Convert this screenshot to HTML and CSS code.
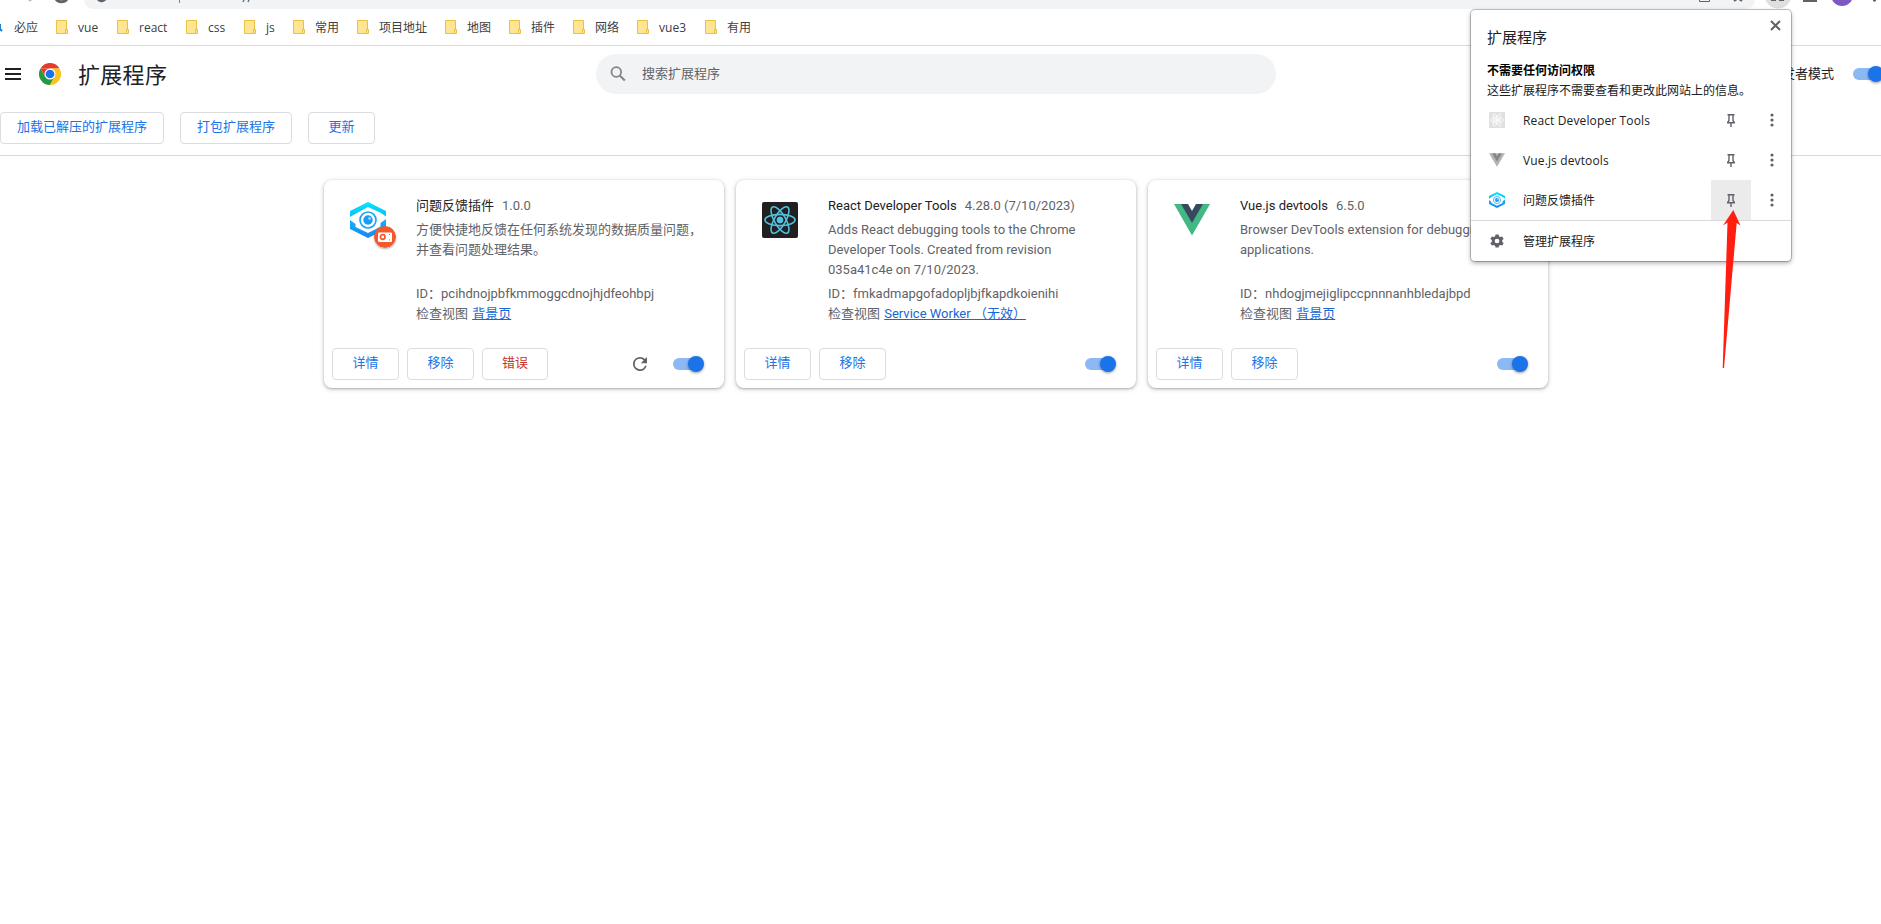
FILE: index.html
```html
<!DOCTYPE html>
<html lang="zh-CN">
<head>
<meta charset="utf-8">
<title>扩展程序</title>
<link rel="stylesheet" href="styles.css">
</head>
<body>
<svg width="0" height="0" class="defs">
  <defs>
    <linearGradient id="cyan" x1="0" y1="0" x2="0" y2="1"><stop offset="0" stop-color="#05e5ff"/><stop offset="1" stop-color="#1b84f2"/></linearGradient>
    <symbol id="folder" viewBox="0 0 12 14"><path d="M.5.5h10v9h1v4H.5z" fill="#ffe591" stroke="#e8c341"/><path d="M9.500 13V9.500h2" fill="none" stroke="#e8c341"/></symbol>
    <symbol id="eye" viewBox="0 0 36 36">
      <path d="M0 15V9L18 0l18 9v5.500l-5-3.500L18 5 6 11.500zM0 18l5.500 4v3L18 31l8-4 4.500-2.500V21L36 17v10l-18 9L0 27z" fill="url(#cyan)"/>
      <path d="M5 18Q18 1 31 18Q18 33 5 18z" fill="#fff"/>
      <circle cx="18" cy="18" r="8" fill="none" stroke="#1ba4f5" stroke-width="1.700"/><circle cx="18" cy="18" r="4.700" fill="#179ff4"/><circle cx="19.500" cy="16.500" r="1.300" fill="#a5e6ff"/>
    </symbol>
    <symbol id="atom" viewBox="0 0 36 36"><g fill="none" stroke-width="1.600"><ellipse cx="18" cy="18" rx="15" ry="5.600"/><ellipse cx="18" cy="18" rx="15" ry="5.600" transform="rotate(60 18 18)"/><ellipse cx="18" cy="18" rx="15" ry="5.600" transform="rotate(120 18 18)"/></g><circle cx="18" cy="18" r="3"/></symbol>
    <symbol id="pin" viewBox="0 0 8 13"><path d="M.5.700h7M2 1v5.500L.7 8.500M6 1v5.500l1.300 2M0 8.700h8M4 9v4" fill="none" stroke="#5f6368" stroke-width="1.400"/></symbol>
    <symbol id="dots" viewBox="0 0 4 14"><circle cx="2" cy="2" r="1.600"/><circle cx="2" cy="7" r="1.600"/><circle cx="2" cy="12" r="1.600"/></symbol>
  </defs>
</svg>

<div class="toolbar">
  <svg class="nav" width="84" height="9"><path d="M29 1l3-2" stroke="#babcbe" stroke-width="2"/><path d="M56-1a7 7 0 0 0 11 0" fill="none" stroke="#5f6368" stroke-width="3"/></svg>
  <div class="omnibox">
    <svg width="1671" height="9"><path d="M14-1q4 4 8-1" fill="none" stroke="#5f6368" stroke-width="3"/><path d="M95.500 0v3" stroke="#80868b"/><path d="M159 2l1-2m4 2l1-2" stroke="#5f7894" stroke-width="1.500"/><path d="M1615.500-1v2.500h10V-1" fill="none" stroke="#5f6368"/><path d="M1650 1l3-2m5 2l-3-2" stroke="#5f6368" stroke-width="2"/></svg>
  </div>
  <svg class="actions" width="126" height="9"><circle cx="23" cy="-5" r="13.500" fill="#dedfe1"/><path d="M16 0h5v1h-5zM24 0h5v1h-5z" fill="#5f6368"/><path d="M48 0h14v2H48z" fill="#5f6368"/><circle cx="87" cy="-5" r="11" fill="#7e57c2"/><circle cx="119.500" cy="0" r="1.700" fill="#5f6368"/></svg>
</div>
<nav class="bookmarks">
  <a class="bing"><svg width="4" height="14"><path d="M0 4v5l2 2" fill="none" stroke="#1684d0" stroke-width="2"/></svg>必应</a>
  <a class="w-vue"><svg><use href="#folder"/></svg>vue</a>
  <a class="w-react"><svg><use href="#folder"/></svg>react</a>
  <a class="w-css"><svg><use href="#folder"/></svg>css</a>
  <a class="w-js"><svg><use href="#folder"/></svg>js</a>
  <a><svg><use href="#folder"/></svg>常用</a>
  <a><svg><use href="#folder"/></svg>项目地址</a>
  <a><svg><use href="#folder"/></svg>地图</a>
  <a><svg><use href="#folder"/></svg>插件</a>
  <a><svg><use href="#folder"/></svg>网络</a>
  <a class="w-vue3"><svg><use href="#folder"/></svg>vue3</a>
  <a><svg><use href="#folder"/></svg>有用</a>
</nav>

<header class="header">
  <svg class="menu" width="16" height="12"><path d="M0 1h16M0 6h16M0 11h16" stroke="#202124" stroke-width="2"/></svg>
  <svg class="logo" width="22" height="22" viewBox="0 0 48 48">
    <path d="M3.200 12A24 24 0 0 1 44.800 12H24z" fill="#e33b2e"/><path d="M3.200 12A24 24 0 0 0 24 48L34.400 30 24 24 13.600 30z" fill="#249a41"/><path d="M44.800 12A24 24 0 0 1 24 48L34.400 30 24 12z" fill="#fcc31e"/><path d="M3.200 12L13.600 30 24 24V12z" fill="#e33b2e"/>
    <circle cx="24" cy="24" r="12" fill="#fff"/><circle cx="24" cy="24" r="9.500" fill="#1a73e8"/>
  </svg>
  <h1>扩展程序</h1>
  <div class="search">
    <svg width="16" height="16" viewBox="0 0 16 16" fill="none" stroke="#80868b"><circle cx="6.300" cy="6" r="4.800" stroke-width="1.800"/><path d="M9.800 9.500l5 5" stroke-width="2"/></svg>
    <span>搜索扩展程序</span>
  </div>
  <div class="devmode"><span>开发者模式</span><i class="toggle"></i></div>
</header>
<div class="devbar">
  <button class="btn load">加载已解压的扩展程序</button>
  <button class="btn pack">打包扩展程序</button>
  <button class="btn update">更新</button>
</div>

<main class="cards">
  <section class="card">
    <div class="info">
      <div class="icon"><svg width="36" height="36"><use href="#eye"/></svg>
        <svg class="badge" width="22" height="22"><circle cx="11" cy="11" r="11" fill="#f4592b"/><rect x="4" y="6.500" width="14" height="9.500" rx="1.200" fill="#fff"/><circle cx="8.700" cy="11" r="2.300" fill="none" stroke="#f4592b" stroke-width="1.700"/><path d="M15 8.500h1M15 14h1" stroke="#f4592b"/></svg>
      </div>
      <div class="text">
        <div class="name">问题反馈插件<span>1.0.0</span></div>
        <p class="desc">方便快捷地反馈在任何系统发现的数据质量问题，<br>并查看问题处理结果。</p>
        <div class="meta">ID：pcihdnojpbfkmmoggcdnojhjdfeohbpj</div>
        <div class="meta">检查视图 <a>背景页</a></div>
      </div>
    </div>
    <div class="foot"><button class="btn">详情</button><button class="btn">移除</button><button class="btn error">错误</button>
      <svg class="reload" width="14" height="14" viewBox="4 4 16 16"><path d="M17.650 6.350A7.960 7.960 0 0 0 12 4a8 8 0 1 0 7.730 10h-2.080A6 6 0 1 1 12 6c1.660 0 3.140.69 4.220 1.780L13 11h7V4z" fill="#5f6368"/></svg>
      <i class="toggle"></i></div>
  </section>
  <section class="card">
    <div class="info">
      <div class="icon"><svg class="react" width="36" height="36"><rect width="36" height="36" rx="2" fill="#202020"/><use href="#atom" fill="#53c1de" stroke="#53c1de"/></svg></div>
      <div class="text">
        <div class="name">React Developer Tools<span>4.28.0 (7/10/2023)</span></div>
        <p class="desc">Adds React debugging tools to the Chrome<br>Developer Tools. Created from revision<br>035a41c4e on 7/10/2023.</p>
        <div class="meta">ID：fmkadmapgofadopljbjfkapdkoienihi</div>
        <div class="meta">检查视图 <a>Service Worker （无效）</a></div>
      </div>
    </div>
    <div class="foot"><button class="btn">详情</button><button class="btn">移除</button><i class="toggle"></i></div>
  </section>
  <section class="card">
    <div class="info">
      <div class="icon"><svg width="36" height="36"><path d="M0 2h7.500L18 20.500 28.500 2H36L18 33.500z" fill="#42b883"/><path d="M7 2h7l4 7 4-7h7L18 21z" fill="#35495e"/></svg></div>
      <div class="text">
        <div class="name">Vue.js devtools<span>6.5.0</span></div>
        <p class="desc">Browser DevTools extension for debugging Vue.js<br>applications.</p>
        <div class="meta">ID：nhdogjmejiglipccpnnnanhbledajbpd</div>
        <div class="meta">检查视图 <a>背景页</a></div>
      </div>
    </div>
    <div class="foot"><button class="btn">详情</button><button class="btn">移除</button><i class="toggle"></i></div>
  </section>
</main>

<aside class="popup">
  <svg class="close" width="11" height="11"><path d="M1 1l9 9M10 1l-9 9" stroke="#5f6368" stroke-width="2"/></svg>
  <h2>扩展程序</h2>
  <strong>不需要任何访问权限</strong>
  <p>这些扩展程序不需要查看和更改此网站上的信息。</p>
  <div class="row"><svg class="ext" viewBox="0 0 36 36"><rect width="36" height="36" fill="#e0e0e0"/><use href="#atom" fill="#fff" stroke="#fff"/></svg><span class="latin">React Developer Tools</span><b class="pinbox"><svg class="pin"><use href="#pin"/></svg></b><svg class="dots"><use href="#dots"/></svg></div>
  <div class="row"><svg class="ext" viewBox="0 0 36 36"><path d="M0 3h36L18 33z" fill="#b4b4b4"/><path d="M7 3h7l4 7 4-7h7L18 22z" fill="#858585"/></svg><span class="latin">Vue.js devtools</span><b class="pinbox"><svg class="pin"><use href="#pin"/></svg></b><svg class="dots"><use href="#dots"/></svg></div>
  <div class="row"><svg class="ext"><use href="#eye"/></svg><span>问题反馈插件</span><b class="pinbox hover"><svg class="pin"><use href="#pin"/></svg></b><svg class="dots"><use href="#dots"/></svg></div>
  <div class="row manage"><svg class="ext" viewBox="0 0 24 24"><path fill="#5f6368" d="M20.400 13.200a8 8 0 0 0 0-2.400l2-1.500-2-3.600-2.500 1a8 8 0 0 0-2-1.200L15.500 3h-4.200l-.6 2.500a8 8 0 0 0-2 1.200l-2.500-1-2 3.600 2.100 1.500a8 8 0 0 0 0 2.400l-2.100 1.500 2 3.600 2.500-1a8 8 0 0 0 2 1.200l.6 2.500h4.200l.4-2.500a8 8 0 0 0 2-1.200l2.500 1 2-3.600zM13.300 15.200a3.200 3.200 0 1 1 0-6.400 3.200 3.200 0 0 1 0 6.400z" transform="translate(-2.600 -1.200) scale(1.100)"/></svg><span>管理扩展程序</span></div>
</aside>
<svg class="arrow" width="20" height="160"><path d="M11.300 0L18.500 15.500 14.700 13 2 158H.7L5.500 12.500 1 15.500z" fill="#ff1e10"/></svg>
</body>
</html>
```

FILE: styles.css
```css
* { box-sizing: border-box; }
body {
  margin: 0;
  width: 1881px;
  height: 924px;
  overflow: hidden;
  position: relative;
  background: #fff;
  color: #202124;
  font: 13px/20px Roboto, "Noto Sans CJK SC", sans-serif;
}
svg { display: block; flex: none; }
.defs { position: absolute; }

.toolbar { display: flex; height: 9px; overflow: hidden; }
.omnibox { width: 1671px; background: #f1f3f4; border-radius: 0 0 16px 16px; overflow: hidden; }

.bookmarks {
  display: flex;
  align-items: center;
  height: 37px;
  border-bottom: 1px solid #d9dadb;
  font: 12px/20px "Open Sans", "Noto Sans CJK SC", sans-serif;
  color: #3c4043;
}
.bookmarks a { display: flex; align-items: center; gap: 10px; height: 22px; margin-right: 18px; padding-top: 2px; white-space: nowrap; }
.bookmarks svg { width: 12px; height: 14px; margin-top: -2px; }
.bookmarks .bing svg { width: 4px; }
.w-vue { width: 43px; letter-spacing: .1px; }
.w-react { width: 51px; }
.w-css { width: 40px; }
.w-js { width: 31px; }
.w-vue3 { width: 50px; }

.header { display: flex; align-items: center; height: 56px; padding-left: 5px; }
.header > * { flex: none; }
.logo { margin-left: 18px; }
.header h1 { margin: 0 0 0 17px; padding-top: 3px; width: 518px; font-size: 22px; font-weight: 400; line-height: 32px; letter-spacing: .3px; }
.search {
  display: flex;
  align-items: center;
  gap: 16px;
  width: 680px;
  height: 40px;
  padding-left: 14px;
  border-radius: 20px;
  background: #f1f3f4;
  color: #5f6368;
}
.search span, .devmode span { padding-bottom: 1px; }
.devmode { display: flex; align-items: center; gap: 19px; margin-left: 493px; white-space: nowrap; }

.toggle { position: relative; flex: none; width: 31px; height: 16px; }
.toggle::before { content: ""; position: absolute; left: 0; top: 2px; width: 28px; height: 12px; border-radius: 6px; background: #8cb8f3; }
.toggle::after { content: ""; position: absolute; right: 0; top: 0; width: 16px; height: 16px; border-radius: 50%; background: #1a73e8; box-shadow: 0 1px 3px rgba(0, 0, 0, .4); }

.devbar { display: flex; gap: 16px; height: 54px; padding-top: 10px; border-bottom: 1px solid #d9dadb; }
.btn {
  width: 67px;
  height: 32px;
  padding: 0 0 2px;
  border: 1px solid #dadce0;
  border-radius: 4px;
  background: #fff;
  color: #1a73e8;
  font: inherit;
}
.load { width: 164px; }
.pack { width: 112px; }
.btn.error { width: 66px; color: #c5341f; }

.cards { display: flex; gap: 12px; padding: 24px 0 0 324px; }
.card {
  display: flex;
  flex-direction: column;
  width: 400px;
  height: 208px;
  border-radius: 8px;
  background: #fff;
  box-shadow: 0 1px 2px rgba(60, 64, 67, .3), 0 1px 4px 1px rgba(60, 64, 67, .18);
  white-space: nowrap;
  overflow: hidden;
}
.info { display: flex; gap: 30px; height: 160px; padding: 16px 0 0 26px; color: #5f6368; }
.icon { position: relative; width: 36px; padding-top: 6px; }
.badge { position: absolute; left: 24px; top: 30px; border-radius: 50%; box-shadow: 0 1px 2px rgba(0, 0, 0, .3); }
.name { color: #202124; }
.name span { margin-left: 8px; color: #5f6368; }
.desc { margin: 4px 0; height: 60px; }
.meta a { margin-left: 1px; color: #1967d2; text-decoration: underline; }
.foot { display: flex; align-items: center; gap: 8px; padding: 8px 20px 8px 8px; }
.foot .toggle { margin-left: auto; }
.reload { margin-left: auto; }
.reload + .toggle { margin-left: 18px; }

.popup {
  position: absolute;
  left: 1471px;
  top: 10px;
  width: 320px;
  height: 251px;
  border-radius: 4px;
  background: #fff;
  box-shadow: 0 0 0 1px rgba(0, 0, 0, .22), 0 2px 5px rgba(0, 0, 0, .35);
  font: 12px/20px "Open Sans", "Noto Sans CJK SC", sans-serif;
  white-space: nowrap;
}
.close { position: absolute; left: 299px; top: 10px; }
.popup h2 { margin: 0; padding: 17px 16px 0; font-size: 15px; font-weight: 400; line-height: 20px; }
.popup strong { display: block; padding: 14px 16px 0; color: #000; }
.popup p { margin: 0; padding-left: 16px; height: 19px; }
.row { display: flex; align-items: center; height: 40px; padding-left: 18px; }
.ext { width: 16px; height: 16px; }
.row span { width: 188px; margin-left: 18px; padding-top: 2px; }
.row .latin { letter-spacing: .13px; }
.pinbox { display: flex; align-items: center; justify-content: center; width: 40px; height: 40px; }
.hover { background: #ebebeb; }
.pin { width: 8px; height: 13px; }
.dots { width: 4px; height: 14px; margin-left: 18.5px; fill: #5f6368; }
.manage { border-top: 1px solid #d9dadb; height: 41px; }

.arrow { position: absolute; left: 1722px; top: 210px; }
```
